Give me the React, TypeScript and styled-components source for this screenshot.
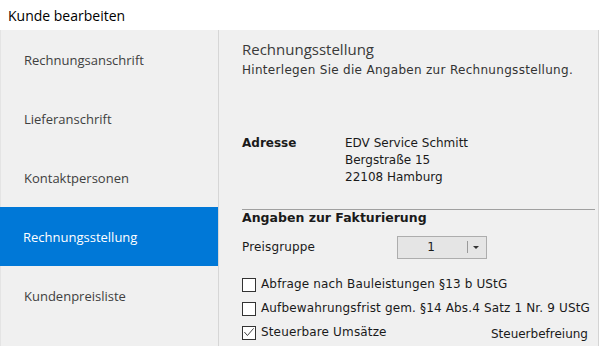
import styled, { createGlobalStyle } from 'styled-components';

const GlobalStyle = createGlobalStyle`
  html, body {
    margin: 0;
    padding: 0;
    background: #ffffff;
  }
  body {
    font-family: "Open Sans", "Liberation Sans", sans-serif;
    width: 600px;
    height: 346px;
    overflow: hidden;
  }
`;

const navItems = [
  'Rechnungsanschrift',
  'Lieferanschrift',
  'Kontaktpersonen',
  'Rechnungsstellung',
  'Kundenpreisliste',
];

const checks = [
  { label: 'Abfrage nach Bauleistungen §13 b UStG', checked: false },
  { label: 'Aufbewahrungsfrist gem. §14 Abs.4 Satz 1 Nr. 9 UStG', checked: false },
  { label: 'Steuerbare Umsätze', checked: true },
];

export default function App() {
  return (
    <>
      <GlobalStyle />
      <Window>
        <TitleBar>Kunde bearbeiten</TitleBar>
        <Body>
          <Sidebar>
            {navItems.map((item) => (
              <NavItem key={item} $active={item === 'Rechnungsstellung'}>
                {item}
              </NavItem>
            ))}
          </Sidebar>
          <Main>
            <PageTitle>Rechnungsstellung</PageTitle>
            <PageHint>Hinterlegen Sie die Angaben zur Rechnungsstellung.</PageHint>

            <AddressRow>
              <FieldLabel>Adresse</FieldLabel>
              <AddressLines>
                <span>EDV Service Schmitt</span>
                <span>Bergstraße 15</span>
                <span>22108 Hamburg</span>
              </AddressLines>
            </AddressRow>

            <Divider />
            <SectionTitle>Angaben zur Fakturierung</SectionTitle>

            <PriceRow>
              <PriceLabel>Preisgruppe</PriceLabel>
              <Combo>
                <ComboValue>1</ComboValue>
                <ComboSep />
                <ComboArrow />
              </Combo>
            </PriceRow>

            <CheckList>
              {checks.map((c, i) => (
                <CheckRow key={c.label}>
                  <CheckBox>
                    {c.checked && (
                      <svg width="13" height="13" viewBox="0 0 13 13">
                        <path d="M1.5 6 L4.8 9.8 L11.5 2" fill="none" stroke="#333" strokeWidth="1" />
                      </svg>
                    )}
                  </CheckBox>
                  <PlainText>{c.label}</PlainText>
                  {i === checks.length - 1 && <RightNote>Steuerbefreiung</RightNote>}
                </CheckRow>
              ))}
            </CheckList>
          </Main>
        </Body>
      </Window>
    </>
  );
}

// ganzes Fenster
const Window = styled.div`
  width: 600px;
  height: 346px;
  display: flex;
  flex-direction: column;
  background: #ffffff;
`;

// weiße Titelleiste oben
const TitleBar = styled.div`
  height: 30px;
  padding-left: 8px;
  display: flex;
  align-items: center;
  font-family: "Open Sans", "Liberation Sans", sans-serif;
  font-size: 14px;
  color: #000;
  flex-shrink: 0;
`;

const Body = styled.div`
  flex: 1;
  display: flex;
  width: 599px;
  border-right: 1px solid #d4d4d4;
  box-sizing: border-box;
  background: #f0f0f0;
  overflow: hidden;
`;

// Navigation links
const Sidebar = styled.div`
  width: 219px;
  flex-shrink: 0;
  border-right: 1px solid #d6d6d6;
  border-left: 1px solid #e4e4e4;
  box-sizing: border-box;
  display: flex;
  flex-direction: column;
`;

const NavItem = styled.div<{ $active?: boolean }>`
  height: 59px;
  flex-shrink: 0;
  display: flex;
  align-items: center;
  padding-left: 23px;
  font-family: "Open Sans", "Liberation Sans", sans-serif;
  font-size: 13px;
  color: ${(p) => (p.$active ? '#ffffff' : '#404040')};
  background: ${(p) => (p.$active ? '#0078d7' : 'transparent')};
  margin-left: ${(p) => (p.$active ? '-1px' : '0')};
`;

// Inhaltsbereich rechts
const Main = styled.div`
  flex: 1;
  padding: 10px 2px 0 23px;
  display: flex;
  flex-direction: column;
`;

const PageTitle = styled.div`
  font-family: "Open Sans", sans-serif;
  font-size: 15px;
  font-weight: 400;
  color: #3a3a3a;
  line-height: 19px;
`;

const PageHint = styled.div`
  font-family: "DejaVu Sans", sans-serif;
  font-size: 12px;
  color: #333;
  line-height: 16px;
  margin-top: 3px;
  letter-spacing: 0.3px;
`;

const AddressRow = styled.div`
  display: flex;
  margin-top: 57px;
`;

const FieldLabel = styled.div`
  width: 103px;
  font-family: "DejaVu Sans", sans-serif;
  font-size: 12px;
  font-weight: 700;
  color: #1a1a1a;
  line-height: 17px;
`;

const AddressLines = styled.div`
  display: flex;
  flex-direction: column;
  font-family: "DejaVu Sans", sans-serif;
  font-size: 12px;
  color: #1a1a1a;
  line-height: 17px;
`;

const Divider = styled.div`
  height: 1px;
  background: #a0a0a0;
  margin-top: 23px;
  margin-right: 1px;
`;

const SectionTitle = styled.div`
  font-family: "DejaVu Sans", sans-serif;
  font-size: 12.5px;
  font-weight: 700;
  color: #1a1a1a;
  line-height: 15px;
`;

const PriceRow = styled.div`
  display: flex;
  align-items: center;
  margin-top: 10px;
  height: 24px;
`;

const PlainText = styled.span`
  font-family: "DejaVu Sans", sans-serif;
  font-size: 12px;
  letter-spacing: 0.15px;
  color: #1a1a1a;
  line-height: 17px;
  white-space: nowrap;
`;

const PriceLabel = styled(PlainText)`
  width: 155px;
  flex-shrink: 0;
`;

// Auswahlfeld Preisgruppe
const Combo = styled.div`
  width: 90px;
  height: 23px;
  box-sizing: border-box;
  border: 1px solid #adadad;
  background: #e5e5e5;
  display: flex;
  align-items: center;
`;

const ComboValue = styled.span`
  width: 66px;
  padding-right: 3px;
  text-align: center;
  font-family: "DejaVu Sans", sans-serif;
  font-size: 12px;
  color: #1a1a1a;
`;

const ComboSep = styled.span`
  width: 1px;
  height: 12px;
  background: #9a9a9a;
`;

const ComboArrow = styled.span`
  margin-left: 5px;
  width: 0;
  height: 0;
  border-left: 3px solid transparent;
  border-right: 3px solid transparent;
  border-top: 3px solid #333;
`;

const CheckList = styled.div`
  display: flex;
  flex-direction: column;
  margin-top: 17px;
  gap: 7px;
`;

const CheckRow = styled.div`
  display: flex;
  align-items: center;
  height: 17px;
`;

const CheckBox = styled.span`
  width: 14px;
  height: 14px;
  box-sizing: border-box;
  border: 1px solid #333;
  background: #fff;
  margin-right: 5px;
  display: flex;
  align-items: center;
  justify-content: center;
  flex-shrink: 0;
  svg {
    display: block;
  }
`;

const RightNote = styled.span`
  margin-left: auto;
  margin-right: 8px;
  margin-top: 3px;
  font-family: "DejaVu Sans", sans-serif;
  font-size: 12px;
  color: #1a1a1a;
`;
